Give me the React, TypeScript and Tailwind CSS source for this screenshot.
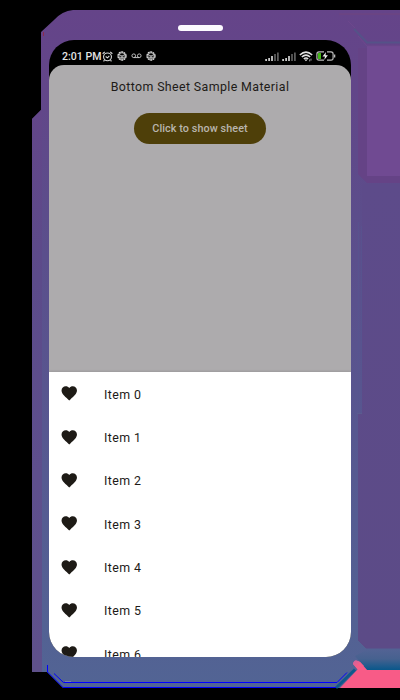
import React from 'react';

const items = [0, 1, 2, 3, 4, 5, 6];

function Heart() {
  return (
    <svg viewBox="0 0 24 24" className="h-[18.5px] w-[18.5px] shrink-0 fill-[#1e1b16]">
      <path d="M12 21.35l-1.45-1.32C5.4 15.36 2 12.28 2 8.5 2 5.42 4.42 3 7.5 3c1.74 0 3.41.81 4.5 2.09C13.09 3.81 14.76 3 16.5 3 19.58 3 22 5.42 22 8.5c0 3.78-3.4 6.86-8.55 11.54L12 21.35z" />
    </svg>
  );
}

function Alarm() {
  return (
    <svg viewBox="0 0 12 12" className="h-[11px] w-[11px]" fill="none" stroke="#ddd" strokeWidth="1.2">
      <circle cx="6" cy="6.4" r="4.3" />
      <path d="M.7 3 3 1M11.3 3 9 1M4 6l2 1.5L8 5.3M2.7 10l-1 1.3M9.3 10l1 1.3" />
    </svg>
  );
}

function Badge() {
  return (
    <svg viewBox="0 0 12 12" className="h-[10px] w-[10px]" fill="none" stroke="#ddd">
      <circle cx="6" cy="6" r="4.8" strokeWidth="1.6" strokeDasharray="2.4 .6" />
      <circle cx="6" cy="6" r="3.8" strokeWidth=".8" />
      <path d="M2.5 4.4 6 6l3.5-1.6M6 6v3.5M3 7.5h6" strokeWidth="1" />
    </svg>
  );
}

function Voicemail() {
  return (
    <svg viewBox="0 0 12 6" className="h-[5.5px] w-[11px]" fill="none" stroke="#ccc" strokeWidth="1">
      <circle cx="3" cy="3" r="2" />
      <circle cx="9" cy="3" r="2" />
      <path d="M3 5h6" />
    </svg>
  );
}

function Signal() {
  return (
    <svg viewBox="0 0 14 9" className="h-[9px] w-[14px]">
      <path d="M.3 7h1.6v2H.3zM3.3 6h1.6v3H3.3zM6.2 4h1.6v5H6.2z" fill="#e2e2e2" />
      <path d="M9.2 2h1.6v7H9.2zM12.1.5h1.6V9h-1.6z" fill="#666" />
    </svg>
  );
}

function Wifi() {
  return (
    <svg viewBox="0 0 14 11" className="h-[11px] w-[14px]" fill="none" stroke="#e4e4e4" strokeWidth="1.5">
      <path d="M.8 4Q7-1.7 13.2 4M2.8 6Q7 2.3 11.2 6M4.8 8Q7 6 9.2 8" />
      <path d="M5.4 8.4h3.2L7 10.2z" fill="#eee" stroke="none" />
      <path d="M10.7 8.4v2M12 7.6v2" strokeWidth="1" stroke="#999" />
    </svg>
  );
}

function Battery() {
  return (
    <svg viewBox="0 0 20 10" className="h-[10px] w-[20px]">
      <path d="M8 .9H3Q.9.9.9 3v4q0 2.1 2.1 2.1h5M11 .9h4Q17.1.9 17.1 3v4q0 2.1-2.1 2.1h-4" fill="none" stroke="#bbb" strokeWidth="1.2" />
      <path d="M2 2h3v6H2z" fill="#42b516" />
      <path d="M10 1 6.5 5.6H9L8.2 9l3.7-4.7H9.5z" fill="#eee" />
      <path d="M18 3.5h1.3v3H18z" fill="#bbb" />
    </svg>
  );
}

function Backdrop() {
  return (
    <svg viewBox="0 0 400 700" className="absolute inset-0 h-[700px] w-[400px]">
      <defs>
        <linearGradient id="body" gradientUnits="userSpaceOnUse" x1="0" y1="10" x2="0" y2="688">
          <stop offset="0" stopColor="#654489" />
          <stop offset=".12" stopColor="#624689" />
          <stop offset=".3" stopColor="#5c4d8b" />
          <stop offset=".56" stopColor="#58558f" />
          <stop offset=".75" stopColor="#555c92" />
          <stop offset="1" stopColor="#526494" />
        </linearGradient>
        <linearGradient id="left" gradientUnits="userSpaceOnUse" x1="0" y1="110" x2="0" y2="672">
          <stop offset="0" stopColor="#634689" />
          <stop offset=".3" stopColor="#5c4b8a" />
          <stop offset=".65" stopColor="#5e4f8d" />
          <stop offset="1" stopColor="#5f518b" />
        </linearGradient>
        <linearGradient id="glow" x1="0" y1="0" x2="0" y2="1">
          <stop offset="0" stopColor="#526394" />
          <stop offset=".45" stopColor="#45618f" />
          <stop offset="1" stopColor="#00568a" />
        </linearGradient>
        <linearGradient id="panel" x1="0" y1="0" x2="0" y2="1">
          <stop offset="0" stopColor="#5d4b8a" />
          <stop offset="1" stopColor="#5c4b87" />
        </linearGradient>
        <linearGradient id="knob" x1="0" y1="0" x2="1" y2="1">
          <stop offset="0" stopColor="#c565a0" />
          <stop offset=".5" stopColor="#f65d88" />
        </linearGradient>
      </defs>
      <path d="M73 10H400V688H63L47 672H32V119L41 110V32L54 20Q62 11 73 10Z" fill="url(#body)" />
      <path d="M32 119 41 110 42 110V672H32Z" fill="url(#left)" />
      <path d="M358 48H367V176H400V183H367L358 174Z" fill="#654386" />
      <path d="M367 46H400V176H367Z" fill="#704a92" />
      <path d="M362 184H400V649H366L358 641V414H362Z" fill="url(#panel)" />
      <path d="M339 14H400" stroke="#71447f" fill="none" />
      <path d="M348 21 355 28M358 36 367 46H400" stroke="#734a8e" opacity=".6" fill="none" />
      <path d="M354 29 367 42.5H400" stroke="#555288" strokeWidth="2" fill="none" />
      <path d="M358.5 222V410M361.5 226V410" stroke="#555590" opacity=".5" fill="none" />
      <path d="M357 413.5H362" stroke="#5d6090" opacity=".6" fill="none" />
      <path d="M366 650H400V670H367L355 656Z" fill="url(#glow)" opacity=".9" />
      <path d="M358 641 366 649H400" stroke="#536393" fill="none" />
      <path d="M336 688 355 669.5" stroke="#00558a" strokeWidth="3" opacity=".8" fill="none" />
      <path d="M340 688 358 669 353 664Q354 658 360 662L367 670H400V688Z" fill="#f85b87" />
      <path d="M353 664Q354 658 360 662L364 666 358 670Z" fill="url(#knob)" />
      <path d="M47.5 665V672L63 687.5H336" stroke="#0000ff" fill="none" />
      <path d="M54 673.5 63.5 682.5H337L347 672.5" stroke="#0000ff" fill="none" />
      <path d="M65 681.5H71" stroke="#777eac" fill="none" />
      <path d="M43.5 32v4" stroke="#8e294d" fill="none" />
    </svg>
  );
}

export default function App() {
  return (
    <main className="relative h-[700px] w-[400px] overflow-hidden bg-black font-['Roboto',sans-serif]">
      <Backdrop />
      <div className="relative flex flex-col items-center pt-[25px]">
        <div className="h-[6px] w-[45px] rounded-full bg-[#fcfaff]" />
        <section className="mt-[9px] flex h-[617px] w-[301.4px] flex-col overflow-hidden rounded-[25px] bg-black">
          <header className="flex h-[25.4px] shrink-0 items-center justify-between pt-[7px] pr-[15px] pl-[12.7px]">
            <div className="flex items-center">
              <span className="w-[40.2px] pt-[1px] text-[10.6px] leading-[14px] font-medium whitespace-nowrap text-[#e4e4e4]">2:01 PM</span>
              <div className="flex items-center gap-[4px]">
                <Alarm />
                <Badge />
                <Voicemail />
                <Badge />
              </div>
            </div>
            <div className="flex items-center gap-[3px]">
              <Signal />
              <Signal />
              <Wifi />
              <Battery />
            </div>
          </header>
          <div className="flex h-[306.6px] shrink-0 flex-col items-center rounded-t-[15px] bg-[#adabad] pt-[12.6px]">
            <h1 className="text-[12.4px] leading-[18px] tracking-[0.38px] whitespace-nowrap text-[#1e1b18]">Bottom Sheet Sample Material</h1>
            <button className="mt-[17px] h-[31px] w-[132.6px] rounded-full bg-[#4e3f09] pt-[2px] text-[10.8px] font-medium tracking-[0.08px] text-[#b9b5ad]">Click to show sheet</button>
          </div>
          <ul className="h-[285px] shrink-0 overflow-hidden bg-white shadow-[0_-1px_2px_rgba(0,0,0,0.1)]">
            {items.map((n) => (
              <li key={n} className="flex h-[43.35px] items-center gap-[25.7px] pl-[10.6px] text-[12.4px] tracking-[0.38px] text-[#1e1b18]">
                <Heart />
                <span className="pt-[2.8px]">Item {n}</span>
              </li>
            ))}
          </ul>
        </section>
      </div>
    </main>
  );
}
